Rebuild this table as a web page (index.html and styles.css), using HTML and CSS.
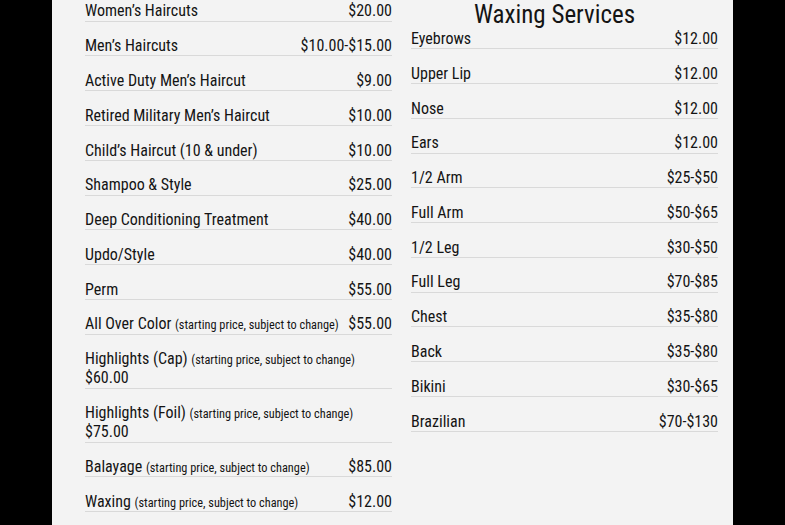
FILE: index.html
```html
<!DOCTYPE html>
<html>
<head>
<meta charset="utf-8">
<link rel="stylesheet" href="styles.css">
</head>
<body>
<div class="panel">
  <div class="col col-left">
    <div class="row"><span class="name">Women’s Haircuts</span><span class="price">$20.00</span></div>
    <div class="row"><span class="name">Men’s Haircuts</span><span class="price">$10.00-$15.00</span></div>
    <div class="row"><span class="name">Active Duty Men’s Haircut</span><span class="price">$9.00</span></div>
    <div class="row"><span class="name">Retired Military Men’s Haircut</span><span class="price">$10.00</span></div>
    <div class="row"><span class="name">Child’s Haircut (10 &amp; under)</span><span class="price">$10.00</span></div>
    <div class="row"><span class="name">Shampoo &amp; Style</span><span class="price">$25.00</span></div>
    <div class="row"><span class="name">Deep Conditioning Treatment</span><span class="price">$40.00</span></div>
    <div class="row"><span class="name">Updo/Style</span><span class="price">$40.00</span></div>
    <div class="row"><span class="name">Perm</span><span class="price">$55.00</span></div>
    <div class="row"><span class="name">All Over Color <small>(starting price, subject to change)</small></span><span class="price">$55.00</span></div>
    <div class="row stack"><span class="name">Highlights (Cap) <small>(starting price, subject to change)</small></span><span class="price">$60.00</span></div>
    <div class="row stack"><span class="name">Highlights (Foil) <small>(starting price, subject to change)</small></span><span class="price">$75.00</span></div>
    <div class="row"><span class="name">Balayage <small>(starting price, subject to change)</small></span><span class="price">$85.00</span></div>
    <div class="row"><span class="name">Waxing <small>(starting price, subject to change)</small></span><span class="price">$12.00</span></div>
  </div>
  <div class="col col-right">
    <h2 class="title">Waxing Services</h2>
    <div class="row"><span class="name">Eyebrows</span><span class="price">$12.00</span></div>
    <div class="row"><span class="name">Upper Lip</span><span class="price">$12.00</span></div>
    <div class="row"><span class="name">Nose</span><span class="price">$12.00</span></div>
    <div class="row"><span class="name">Ears</span><span class="price">$12.00</span></div>
    <div class="row"><span class="name">1/2 Arm</span><span class="price">$25-$50</span></div>
    <div class="row"><span class="name">Full Arm</span><span class="price">$50-$65</span></div>
    <div class="row"><span class="name">1/2 Leg</span><span class="price">$30-$50</span></div>
    <div class="row"><span class="name">Full Leg</span><span class="price">$70-$85</span></div>
    <div class="row"><span class="name">Chest</span><span class="price">$35-$80</span></div>
    <div class="row"><span class="name">Back</span><span class="price">$35-$80</span></div>
    <div class="row"><span class="name">Bikini</span><span class="price">$30-$65</span></div>
    <div class="row"><span class="name">Brazilian</span><span class="price">$70-$130</span></div>
  </div>
</div>
</body>
</html>
```
FILE: styles.css
```css
html, body {
  margin: 0;
  padding: 0;
  background: #000;
  height: 100%;
  overflow: hidden;
}
.panel {
  width: 681px;
  margin: 0 auto;
  box-sizing: border-box;
  padding: 0 15px 0 33px;
  min-height: 525px;
  background: #f3f3f3;
  display: grid;
  grid-template-columns: 307px 307px;
  column-gap: 19px;
  align-items: start;
  font-family: "Roboto Condensed", Roboto, sans-serif;
  font-stretch: 75%;
  color: #141414;
}
.col-left {
  padding-top: 1.4px;
}
.row {
  display: flex;
  justify-content: space-between;
  align-items: baseline;
  font-size: 16px;
  line-height: 19.2px;
  border-bottom: 1px solid #d9d9d9;
  margin-bottom: 14.58px;
}
.name {
  white-space: nowrap;
}
.row.stack {
  display: block;
}
.row.stack .price {
  display: block;
}
.row small {
  font-size: 12.3px;
  line-height: 1;
}
.title {
  margin: 0;
  padding-right: 20px;
  text-align: center;
  font-weight: normal;
  font-size: 25px;
  line-height: 29px;
}
```
